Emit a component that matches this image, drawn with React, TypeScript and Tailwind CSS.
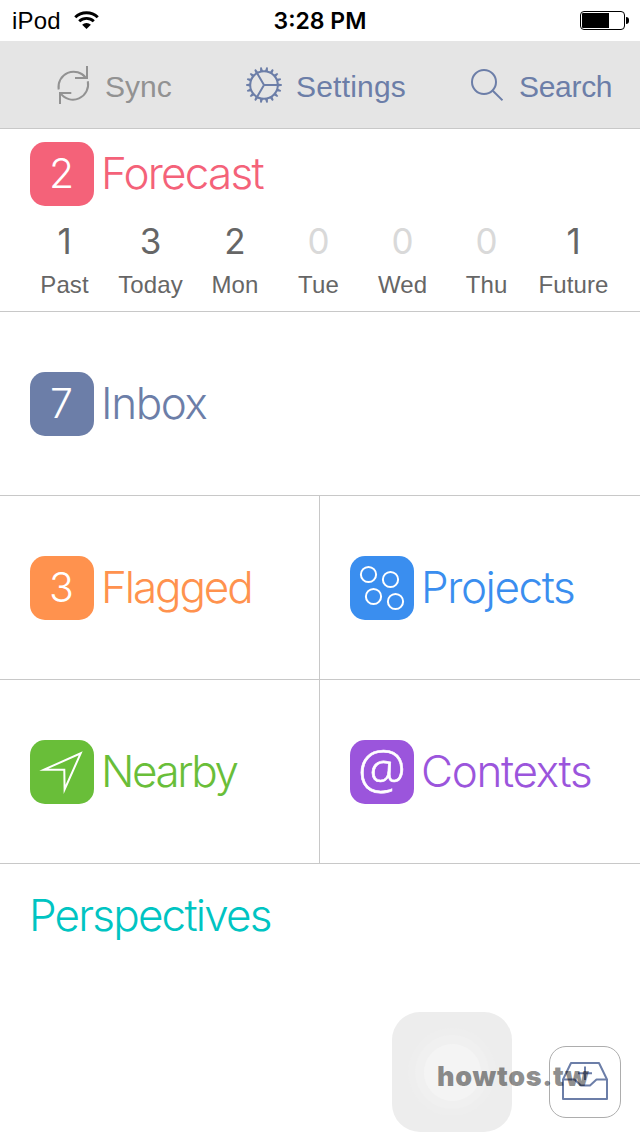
import type { ReactNode } from 'react';

const forecast = [
  { count: 1, label: 'Past' },
  { count: 3, label: 'Today' },
  { count: 2, label: 'Mon' },
  { count: 0, label: 'Tue' },
  { count: 0, label: 'Wed' },
  { count: 0, label: 'Thu' },
  { count: 1, label: 'Future' },
];

const gearTeeth = Array.from({ length: 18 }, (_, i) => i * 20);

const WifiIcon = () => (
  <svg className="w-[25px] h-[18px]" viewBox="0 0 24 18" preserveAspectRatio="none" fill="none" stroke="black">
    <path d="M1.2 6.2a15.3 15.3 0 0 1 21.6 0" strokeWidth={2.8} />
    <path d="M5 10.2a9.9 9.9 0 0 1 14 0" strokeWidth={2.7} />
    <path d="M12 18L7.8 13.8a6 6 0 0 1 8.4 0z" fill="black" stroke="none" />
  </svg>
);

const SyncIcon = () => (
  <svg className="w-9 h-10 shrink-0" viewBox="0 0 36 40" fill="none" stroke="currentColor" strokeWidth={2}>
    <path d="M3.7 24.5A15.2 15.2 0 0 1 31 13" />
    <path d="M32 1v11.9H20" />
    <path d="M32.8 16.3A15.2 15.2 0 0 1 5.5 28.2" />
    <path d="M5 39V28h11.3" />
  </svg>
);

const GearIcon = () => (
  <svg className="w-9 h-9 shrink-0" viewBox="-18 -18 36 36" fill="none" stroke="currentColor" strokeWidth={2}>
    <circle r={13.8} />
    {gearTeeth.map((deg) => (
      <path key={deg} d="M14 -1.5L17.9 -.8V.8L14 1.5z" fill="currentColor" stroke="none" transform={`rotate(${deg})`} />
    ))}
    <path d="M0 0H14M0 0L-7 -12M0 0L-7 12" />
  </svg>
);

const SearchIcon = () => (
  <svg className="w-8 h-8 shrink-0" viewBox="0 0 32 32" fill="none" stroke="currentColor" strokeWidth={2}>
    <circle cx={13} cy={13} r={12} />
    <path d="M21.8 21.8L31.5 31.3" />
  </svg>
);

const CirclesIcon = () => (
  <svg className="w-16 h-16" viewBox="0 0 64 64" fill="none" stroke="white" strokeWidth={2}>
    <circle cx={18.5} cy={18.5} r={7.6} />
    <circle cx={40.5} cy={23.5} r={7.6} />
    <circle cx={23.5} cy={40.5} r={7.6} />
    <circle cx={45.5} cy={45.5} r={7.6} />
  </svg>
);

const ArrowIcon = () => (
  <svg className="w-16 h-16" viewBox="0 0 64 64" fill="none" stroke="white" strokeWidth={2} strokeMiterlimit={10}>
    <path d="M14 29.7L50.7 13.3L34.6 49.5L34.3 29.7z" />
  </svg>
);

const TrayIcon = () => (
  <svg className="w-[46px] h-[38px] shrink-0" viewBox="0 0 46 38" fill="none" stroke="#6c7ea8" strokeWidth={2} strokeLinejoin="round">
    <path d="M1 17.5L9 1H37L45 17.5V37H1z" />
    <path d="M1 17.5H12.5L19 23.5H28L34.5 17.5H45" />
    <path d="M23 4.5V18M16 11.2H30" />
  </svg>
);

type TileProps = { color: string; title: string; tracking: string; children: ReactNode };

const Tile = ({ color, title, tracking, children }: TileProps) => (
  <div className={`flex h-16 ${color}`}>
    <div className="w-16 h-16 rounded-[15px] bg-current flex justify-center shrink-0">
      {children}
    </div>
    <h2 className={`ml-[7px] font-light text-[44px] leading-[63px] whitespace-nowrap ${tracking}`}>{title}</h2>
  </div>
);

const Count = ({ value }: { value: number }) => (
  <span className="text-white font-light text-[41px] leading-[63px] pr-px">{value}</span>
);

const App = () => {
  return (
    <div className="relative w-[640px] h-[1136px] bg-white overflow-hidden font-['Inter',sans-serif]">
      <header className="h-[41px] px-3 grid grid-cols-3 text-black">
        <div className="flex items-start gap-[13px]">
          <span className="font-['Liberation_Sans',sans-serif] text-2xl leading-[41px] tracking-[0.2px]">iPod</span>
          <div className="pt-[11px]"><WifiIcon /></div>
        </div>
        <div className="text-center font-semibold text-[23px] leading-[43px]">3:28 PM</div>
        <div className="flex items-start justify-end pt-[11px]">
          <div className="w-[45px] h-[19px] border border-black rounded-[4px] p-px">
            <div className="w-[27px] h-[15px] bg-black rounded-l-[1px]"></div>
          </div>
          <div className="w-[3px] h-[7px] mt-1.5 ml-px -mr-px bg-black rounded-r-full"></div>
        </div>
      </header>

      <nav className="h-[88px] bg-[#e5e5e5] border-b border-[#c8c8c8] flex font-['Liberation_Sans',sans-serif] text-[30px] leading-[91px] text-[#6c7ea8]">
        <div className="flex w-[246px] pl-[55px] text-[#929292]">
          <div className="pt-6"><SyncIcon /></div>
          <span className="ml-3.5">Sync</span>
        </div>
        <div className="flex w-[225px]">
          <div className="pt-[26px]"><GearIcon /></div>
          <span className="ml-3.5 tracking-[0.2px]">Settings</span>
        </div>
        <div className="flex">
          <div className="pt-7"><SearchIcon /></div>
          <span className="ml-4 tracking-[-0.3px]">Search</span>
        </div>
      </nav>

      <section className="h-[183px] border-b border-[#c8c8c8] pt-[13px]">
        <div className="pl-[30px]">
          <Tile color="text-[#f46279]" title="Forecast" tracking="tracking-[-1.75px]">
            <Count value={2} />
          </Tile>
        </div>
        <div className="grid grid-cols-[86px_86px_83px_84px_84px_84px_90px] pl-[21.5px] pt-[15px] text-center">
          {forecast.map(({ count, label }) => (
            <div key={label}>
              <div className={`text-[35px] leading-[40px] ${count ? 'text-[#666666]' : 'text-[#d9d9d9]'}`}>{count}</div>
              <div className="font-['Liberation_Sans',sans-serif] text-2xl leading-[47px] tracking-[0.1px] text-[#666666]">{label}</div>
            </div>
          ))}
        </div>
      </section>

      <section className="h-[184px] border-b border-[#c8c8c8] pt-[60px] pl-[30px]">
        <Tile color="text-[#6c7ea8]" title="Inbox" tracking="tracking-[-1.4px]">
          <Count value={7} />
        </Tile>
      </section>

      <section className="grid grid-cols-2">
        <div className="h-[184px] border-b border-r border-[#c8c8c8] pt-[60px] pl-[30px]">
          <Tile color="text-[#ff924e]" title="Flagged" tracking="tracking-[-2.1px]">
            <Count value={3} />
          </Tile>
        </div>
        <div className="h-[184px] border-b border-[#c8c8c8] pt-[60px] pl-[30px]">
          <Tile color="text-[#3a8eef]" title="Projects" tracking="tracking-[-1.4px]">
            <CirclesIcon />
          </Tile>
        </div>
        <div className="h-[184px] border-b border-r border-[#c8c8c8] pt-[60px] pl-[30px]">
          <Tile color="text-[#69be39]" title="Nearby" tracking="tracking-[-2.4px]">
            <ArrowIcon />
          </Tile>
        </div>
        <div className="h-[184px] border-b border-[#c8c8c8] pt-[60px] pl-[30px]">
          <Tile color="text-[#9b55dc]" title="Contexts" tracking="tracking-[-1.3px]">
            <span className="font-['Open_Sans',sans-serif] font-light text-white text-[54px] leading-[54px] [-webkit-text-stroke:0.6px_white]">@</span>
          </Tile>
        </div>
      </section>

      <h2 className="pl-[29px] pt-[20px] font-light text-[44px] leading-[63px] tracking-[-1.8px] text-[#00c4c2]">Perspectives</h2>

      {/* assistive touch button */}
      <div className="absolute left-[392px] top-[1012px] w-[120px] h-[120px] rounded-[28px] bg-[#ededed] flex items-center justify-center">
        <div className="w-[88px] h-[88px] rounded-full bg-[#eeeeee] flex items-center justify-center">
          <div className="w-[74px] h-[74px] rounded-full bg-[#f0f0f0] flex items-center justify-center">
            <div className="w-[57px] h-[57px] rounded-full bg-[#f4f4f4]"></div>
          </div>
        </div>
      </div>

      <button className="absolute left-[549px] top-[1046px] w-[72px] h-[72px] rounded-[17px] border border-[#adadad] bg-white flex items-start pl-3 pt-[15px]">
        <TrayIcon />
      </button>

      <div className="absolute left-[437px] top-[1061px] font-black text-[27px] leading-8 tracking-[0.7px] text-black/45">howtos.tw</div>
    </div>
  );
};

export default App;
